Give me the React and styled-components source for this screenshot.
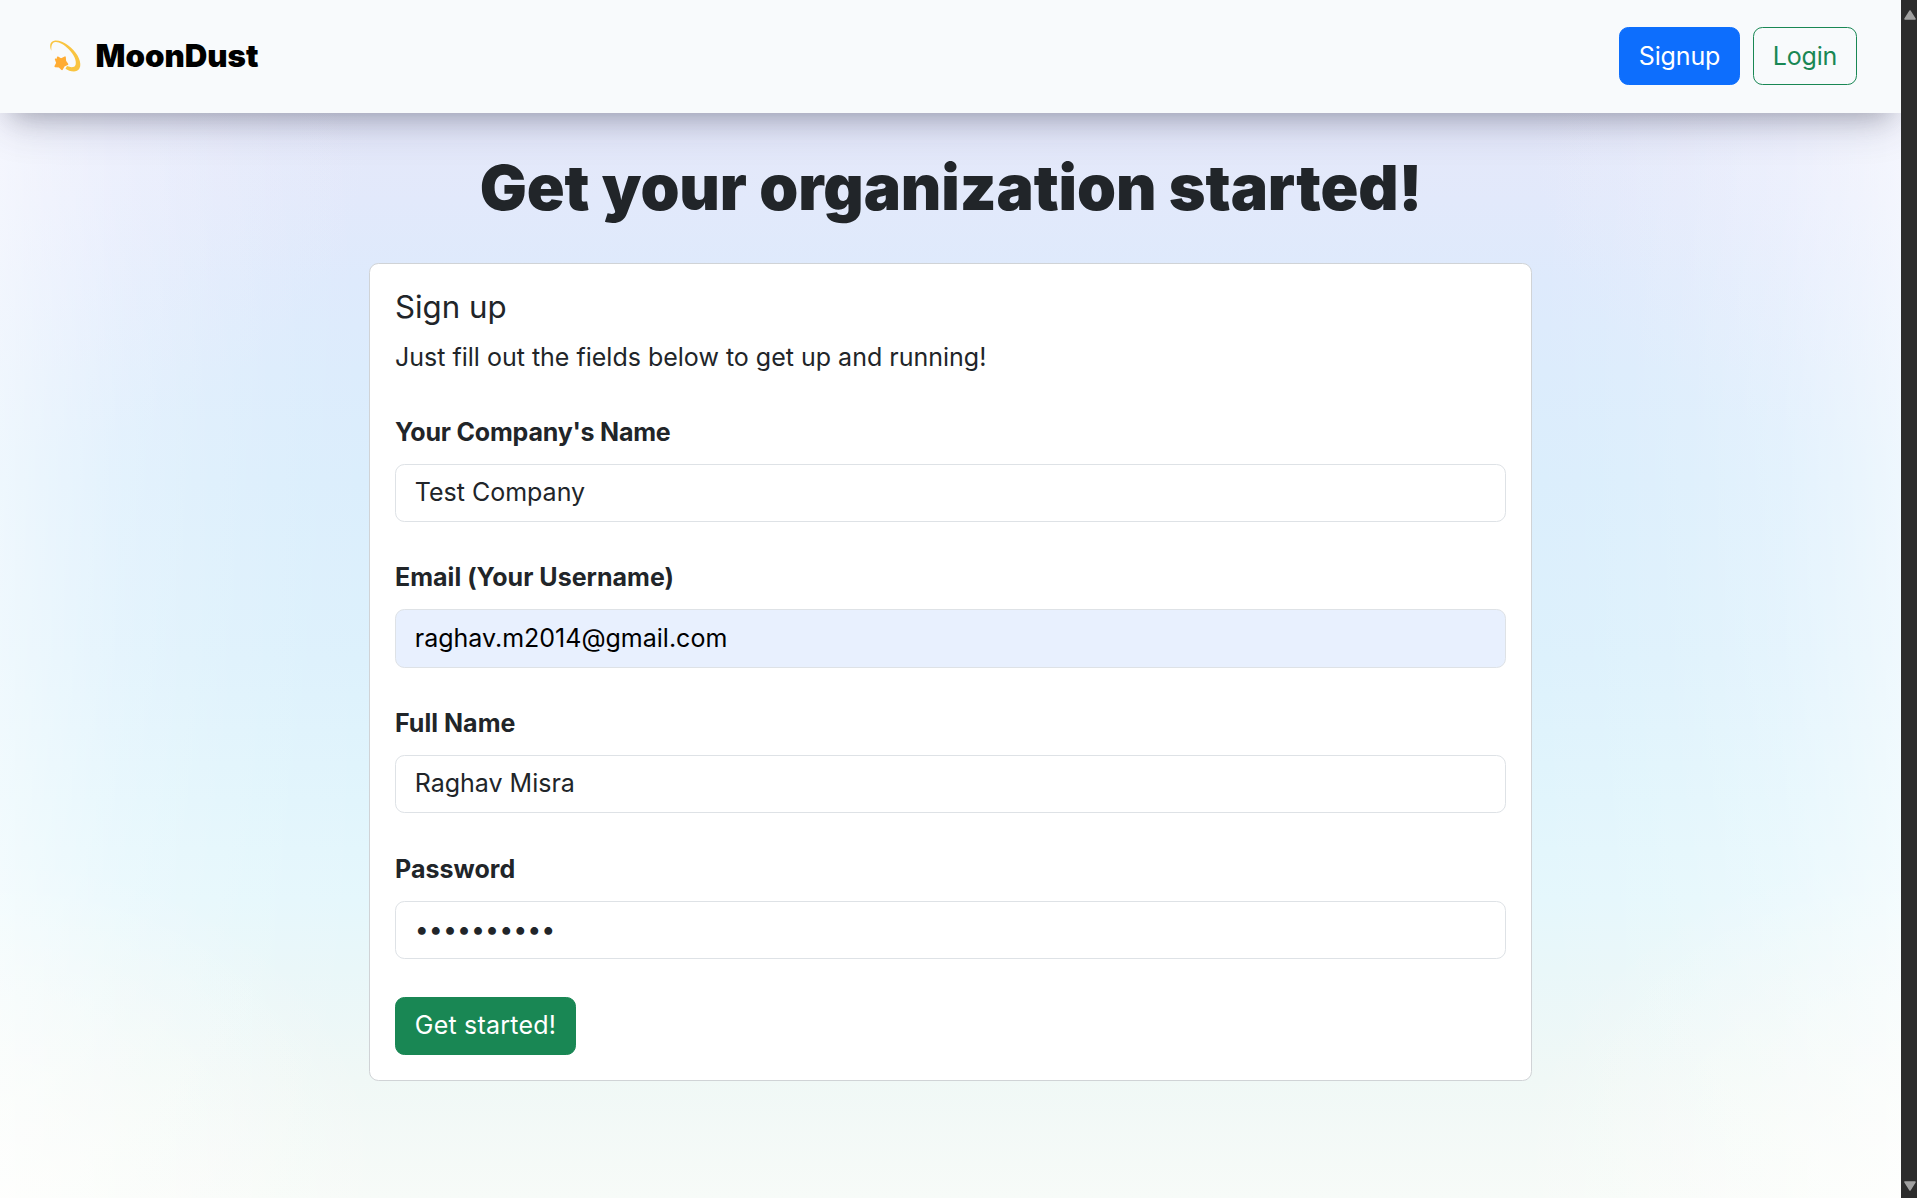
import React from 'react';
import styled, { createGlobalStyle } from 'styled-components';

const GlobalStyle = createGlobalStyle`
  *, *::before, *::after {
    box-sizing: border-box;
  }

  body {
    margin: 0;
    overflow: hidden;
    font-family: Inter, 'Liberation Sans', sans-serif;
    font-size: 25px;
    font-weight: 400;
    line-height: 1.5;
    color: #212529;
  }
`;

const Window = styled.div`
  display: flex;
  height: 100vh;
`;

const Page = styled.div`
  flex: 1;
  min-width: 0;
  overflow: hidden;
  background:
    linear-gradient(
      to right,
      rgba(255, 255, 255, 0.54) 0,
      rgba(255, 255, 255, 0.4) 50px,
      rgba(255, 255, 255, 0.24) 120px,
      rgba(255, 255, 255, 0.12) 210px,
      rgba(255, 255, 255, 0.04) 300px,
      rgba(255, 255, 255, 0) 380px,
      rgba(255, 255, 255, 0) calc(100% - 380px),
      rgba(255, 255, 255, 0.04) calc(100% - 300px),
      rgba(255, 255, 255, 0.12) calc(100% - 210px),
      rgba(255, 255, 255, 0.24) calc(100% - 120px),
      rgba(255, 255, 255, 0.4) calc(100% - 50px),
      rgba(255, 255, 255, 0.54) 100%
    ),
    radial-gradient(ellipse 400px 340px at 0 100%, rgba(255, 255, 252, 0.6), rgba(255, 255, 252, 0)),
    radial-gradient(ellipse 400px 340px at 100% 100%, rgba(255, 255, 252, 0.6), rgba(255, 255, 252, 0)),
    radial-gradient(ellipse 380px 340px at 0 113px, rgba(234, 237, 253, 0.7), rgba(234, 237, 253, 0)),
    radial-gradient(ellipse 380px 340px at 100% 113px, rgba(234, 237, 253, 0.7), rgba(234, 237, 253, 0)),
    linear-gradient(
      to bottom,
      #e5e8f9 113px,
      #e2e9fb 200px,
      #deeafc 280px,
      #dcecfc 370px,
      #dbeefc 480px,
      #ddf1fc 660px,
      #e1f5fc 800px,
      #e5f7fc 900px,
      #e9f7f9 970px,
      #f0f8f6 1080px,
      #f7fbf8 1198px
    );
`;

const Navbar = styled.header`
  display: flex;
  align-items: center;
  justify-content: space-between;
  height: 113px;
  padding: 0 44px 1px 48px;
  background: #f8fafc;
  box-shadow:
    rgba(50, 50, 93, 0.23) 0 16px 42px -6px,
    rgba(0, 0, 0, 0.24) 0 12.5px 25px -12.5px;
`;

const Brand = styled.div`
  display: flex;
  align-items: center;
  gap: 13.5px;
  font-size: 31.25px;
  font-weight: 900;
  color: #000;
`;

const NavActions = styled.div`
  display: flex;
  gap: 13px;
`;

const colors = {
  primary: '#0d6efd',
  success: '#198754',
};

const Button = styled.button`
  height: 58px;
  padding: 1px 18.75px 0;
  border: 1px solid ${({ $color }) => colors[$color]};
  border-radius: 9.4px;
  background: ${({ $color, $outline }) => ($outline ? 'transparent' : colors[$color])};
  color: ${({ $color, $outline }) => ($outline ? colors[$color] : '#fff')};
  font: inherit;
  line-height: 37.5px;
  letter-spacing: -0.15px;
`;

const SubmitButton = styled(Button)`
  display: block;
  width: 181px;
  padding-top: 0;
  letter-spacing: 0.22px;
`;

const Main = styled.main`
  display: flex;
  flex-direction: column;
  align-items: center;
  padding-top: 37px;
`;

const Heading = styled.h1`
  margin: 0 0 38px;
  padding-left: 1px;
  font-size: 62.5px;
  font-weight: 900;
  line-height: 75px;
  letter-spacing: -0.09px;
`;

const Card = styled.form`
  width: 1163px;
  padding: 25px;
  border: 1px solid #d0d3d6;
  border-radius: 9.4px;
  background: #fff;
`;

const CardTitle = styled.h5`
  margin: 0 0 12.5px;
  font-size: 31.25px;
  font-weight: 400;
  line-height: 1.2;
`;

const CardText = styled.p`
  margin: 0 0 37.2px;
`;

const Field = styled.div`
  display: flex;
  flex-direction: column;
  gap: 12.5px;
  margin-bottom: 37.5px;

  &:last-of-type {
    margin-bottom: 37.8px;
  }
`;

const Label = styled.label`
  font-weight: 700;
  letter-spacing: ${({ $tight }) => ($tight ? '-0.2px' : '0.03px')};
`;

const Input = styled.input`
  height: 58.2px;
  padding: 0 18.75px 1.4px;
  border: 1px solid #dee2e6;
  border-radius: 9.4px;
  outline: none;
  background: ${({ $autofilled }) => ($autofilled ? '#e8f0fe' : '#fff')};
  color: ${({ $autofilled }) => ($autofilled ? '#000' : '#212529')};
  font: inherit;
`;

const Scrollbar = styled.div`
  display: flex;
  flex-direction: column;
  justify-content: space-between;
  align-items: flex-end;
  width: 16px;
  padding: 10px 1px 7px 0;
  background: #2c2c2c;
`;

const Arrow = styled.svg`
  display: block;
  transform: ${({ $down }) => ($down ? 'rotate(180deg)' : 'none')};
`;

const fields = [
  { id: 'company', label: "Your Company's Name", type: 'text', value: 'Test Company', tight: true },
  { id: 'email', label: 'Email (Your Username)', type: 'text', value: 'raghav.m2014@gmail.com', autofilled: true },
  { id: 'name', label: 'Full Name', type: 'text', value: 'Raghav Misra' },
  { id: 'password', label: 'Password', type: 'password', value: 'moondust10' },
];

function DizzyIcon() {
  return (
    <svg width="34" height="34" viewBox="0 0 34 34" aria-hidden="true">
      <path
        d="M3.400 11.700C1.200 7 1.800 2 7.200 1.400C15.200 1 25 8.500 29.500 16.500C34 24.500 33.400 32.100 26 32.500C22.500 32.500 19.700 31.300 17.500 29.700L19 27.100C23 28.800 26.600 28.700 27.600 25.700C28.800 21.500 25.800 15.500 20.700 10.300C16.200 5.700 11.200 2.700 7.500 3C3.700 3.300 3.100 7 3.400 11.700Z"
        fill="#f9c440"
      />
      <path
        d="M9.700 18.200L13 20.200L17 18.200L17.400 22.300L19.500 25.300L16 26.800L14 30.300L11.200 27.700L7.200 27.400L9 23.900L7.600 20.200L9.700 20.500Z"
        fill="#ffac33"
        stroke="#ffac33"
        strokeWidth="1.600"
        strokeLinejoin="round"
      />
    </svg>
  );
}

function ScrollArrow({ down }) {
  return (
    <Arrow $down={down} width="12" height="10" viewBox="0 0 12 10">
      <path d="M6 1L11 9H1Z" fill="#a0a0a0" stroke="#a0a0a0" strokeWidth="1.500" strokeLinejoin="round" />
    </Arrow>
  );
}

export default function App() {
  return (
    <>
      <GlobalStyle />
      <Window>
        <Page>
          <Navbar>
            <Brand>
              <DizzyIcon />
              MoonDust
            </Brand>
            <NavActions>
              <Button $color="primary">Signup</Button>
              <Button $color="success" $outline>Login</Button>
            </NavActions>
          </Navbar>
          <Main>
            <Heading>Get your organization started!</Heading>
            <Card onSubmit={(e) => e.preventDefault()}>
              <CardTitle>Sign up</CardTitle>
              <CardText>Just fill out the fields below to get up and running!</CardText>
              {fields.map(({ id, label, type, value, autofilled, tight }) => (
                <Field key={id}>
                  <Label htmlFor={id} $tight={tight}>{label}</Label>
                  <Input id={id} type={type} defaultValue={value} spellCheck={false} $autofilled={autofilled} />
                </Field>
              ))}
              <SubmitButton $color="success">Get started!</SubmitButton>
            </Card>
          </Main>
        </Page>
        <Scrollbar>
          <ScrollArrow />
          <ScrollArrow down />
        </Scrollbar>
      </Window>
    </>
  );
}
